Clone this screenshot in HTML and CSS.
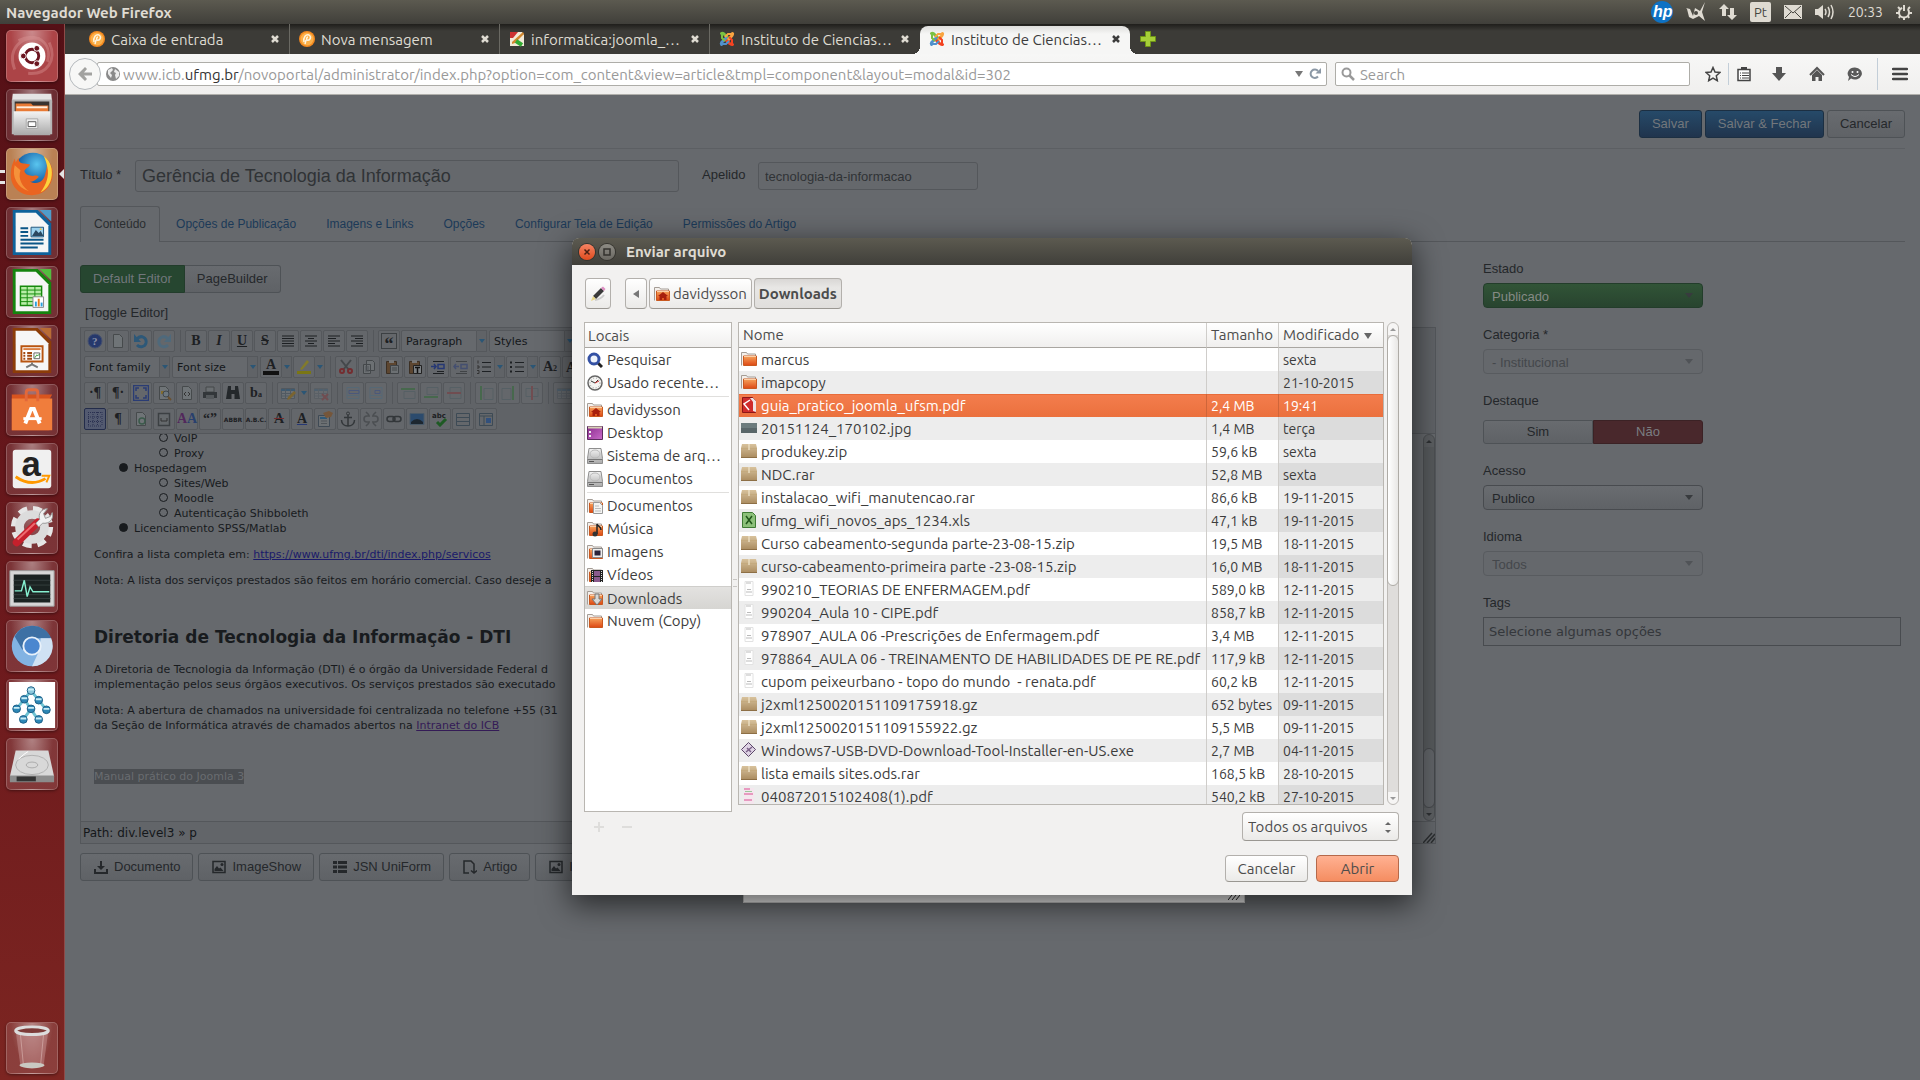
FILE: index.html
```html
<!DOCTYPE html>
<html lang="pt-BR">
<head>
    <meta charset="UTF-8">
    <meta name="viewport" content="width=device-width, initial-scale=1.0">
    <title>Instituto de Ciencias Biológicas - Enviar arquivo</title>
    <link rel="stylesheet" href="styles.css">
</head>
<body>
    <!-- shared icons -->
    <svg class="sprite" width="0" height="0" aria-hidden="true">
        <defs>
            <linearGradient id="g-orange" x1="0" y1="0" x2="0" y2="1"><stop offset="0" stop-color="#f7a35c"/><stop offset="1" stop-color="#dd4814"/></linearGradient>
            <linearGradient id="g-box" x1="0" y1="0" x2="0" y2="1"><stop offset="0" stop-color="#d8c29c"/><stop offset="1" stop-color="#a98a5e"/></linearGradient>
            <linearGradient id="g-grey" x1="0" y1="0" x2="0" y2="1"><stop offset="0" stop-color="#f4f4f4"/><stop offset="1" stop-color="#a9a9a9"/></linearGradient>
            <linearGradient id="g-purple" x1="0" y1="0" x2="1" y2="1"><stop offset="0" stop-color="#8b2c8f"/><stop offset="1" stop-color="#c86bc9"/></linearGradient>
            <radialGradient id="g-fox" cx=".6" cy=".3" r=".8"><stop offset="0" stop-color="#59c5ef"/><stop offset=".6" stop-color="#1863a8"/><stop offset="1" stop-color="#0b2b63"/></radialGradient>
        </defs>
        <symbol id="i-folder" viewBox="0 0 16 16"><path d="M.5 14.500V1.500h5l1 1.500h8v3" fill="#f4f0ec" stroke="#a59d96"/><path d="M2.500 5h13v9.500h-13z" fill="url(#g-orange)" stroke="#c9581f"/><path d="M3 5.500h12" stroke="#fbd0a8"/></symbol>
        <symbol id="i-home-folder" viewBox="0 0 16 16"><use href="#i-folder"/><path d="M9 6l5 4h-1.500v4h-2.500v-2h-2v2h-2.500v-4H4z" fill="#a8200d"/></symbol>
        <symbol id="i-box" viewBox="0 0 16 16"><path d="M1 1h14l1 4v10H0V5z" fill="url(#g-box)"/><path d="M0 5.500h16" stroke="#c4aa7e"/><path d="M0 14.500h16" stroke="#8d6f45"/><path d="M8 1v6" stroke="#eadcc0" stroke-width="1.500"/></symbol>
        <symbol id="i-disk" viewBox="0 0 16 16"><path d="M2 .5h12l1.500 10v5H.5v-5z" fill="url(#g-grey)" stroke="#8e8e8e"/><ellipse cx="8" cy="6" rx="5" ry="4" fill="none" stroke="#b9b9b9"/><path d="M1 11.500h14" stroke="#777"/><path d="M2 13.500h5" stroke="#555"/></symbol>
        <symbol id="i-doc" viewBox="0 0 16 16"><path d="M4 .5h8v14H4z" fill="#fff" stroke="#e2e2e2"/><path d="M5 2h5M6 8.500h4M5 11h6" stroke="#bbb"/></symbol>
        <symbol id="i-joomla" viewBox="0 0 16 16"><g fill="none" stroke-width="3" stroke-linecap="round"><path d="M2.500 2.500C4 1.500 5 3 8.500 6.500" stroke="#7ac143"/><path d="M13.500 2.500C14.500 4 12 5.500 9 9" stroke="#f9a541"/><path d="M13.500 13.500C12 14.500 10 12 7 9" stroke="#f44321"/><path d="M2.500 13.500C1.500 12 3.500 10.500 7 7" stroke="#5091cd"/></g><g fill="none" stroke-width="2"><path d="M3 3v4l3 3" stroke="#7ac143"/><path d="M13 3H9L6 6" stroke="#f9a541"/><path d="M13 13V9l-3-3" stroke="#f44321"/><path d="M3 13h4l3-3" stroke="#5091cd"/></g></symbol>
        <symbol id="i-mail-tab" viewBox="0 0 16 16"><circle cx="8" cy="8" r="8" fill="#f58a1f"/><circle cx="8" cy="8" r="6.500" fill="#fbb04a"/><path d="M5 11c-1-5 2-8 5-7 3 2 1 6-2 5-1-1 0-3 1-3M7 9l-1 4" fill="none" stroke="#fff4df" stroke-width="1.500"/></symbol>
        <symbol id="i-close" viewBox="0 0 10 10"><path d="M2 2l6 6M8 2L2 8" stroke="currentColor" stroke-width="2.500"/></symbol>
        <symbol id="i-picture" viewBox="0 0 14 14"><path d="M1 1.500h12v11H1z" fill="none" stroke="currentColor" stroke-width="1.500"/><path d="M2.500 11V9L5 6l2 2.500 1.500-1 3 3.500z" fill="currentColor"/><circle cx="10" cy="4.500" r="1.500" fill="currentColor"/></symbol>
        <symbol id="i-page" viewBox="0 0 16 16"><path d="M3.500 1.500h6l3 3v10h-9z" fill="#6f7477" stroke="#464a4c"/></symbol>
        <symbol id="i-grid" viewBox="0 0 16 16"><path d="M1.500 3.500h13v10h-13z" fill="#6b7074" stroke="#51585f"/><path d="M1 5h14" stroke="#3e5a70" stroke-width="2"/><path d="M1 8.500h14M1 11h14M5.500 4v9M10.500 4v9" stroke="#515a62"/></symbol>
    </svg>

    <header class="panel">
        <strong>Navegador Web Firefox</strong>
        <div class="indicators">
            <svg width="22" height="22" viewBox="0 0 22 22"><circle cx="11" cy="11" r="11" fill="#0e72c4"/><text x="2" y="16" class="hp">hp</text></svg>
            <svg width="20" height="20" viewBox="0 0 20 20"><path d="M0 6l4 1 3 7 2-8 5 3 5-9-3 10 3 9-6-5-6 3-4-2-2-8z" fill="#dfdbd2"/><circle cx="10" cy="11" r="2" fill="#4a4943"/></svg>
            <svg width="18" height="18" viewBox="0 0 18 18"><path d="M5 1l5 5H7v7H3V6H0zM13 17l-5-5h3V5h4v7h3z" fill="#dfdbd2"/></svg>
            <span class="kbd">Pt</span>
            <svg width="18" height="14" viewBox="0 0 18 14"><path d="M0 0h18v14H0z" fill="#dfdbd2"/><path d="M1 1l8 7 8-7M1 13l6-6M17 13l-6-6" fill="none" stroke="#46453f"/></svg>
            <svg width="20" height="16" viewBox="0 0 20 16"><path d="M0 5h3l5-4v14l-5-4H0z" fill="#dfdbd2"/><path d="M10 5q2 3 0 6M13 3q3 5 0 10M16 1q4 7 0 14" fill="none" stroke="#dfdbd2" stroke-width="1.500"/></svg>
            <time>20:33</time>
            <svg width="16" height="16" viewBox="0 0 16 16"><circle cx="8" cy="8.500" r="5" fill="none" stroke="#dfdbd2" stroke-width="2" stroke-dasharray="26 6" stroke-dashoffset="-27"/><path d="M8 1v6M2 3l2 2M14 3l-2 2M0 9h3M13 9h3M3 14l1-2M13 14l-1-2M8 13v3" stroke="#dfdbd2" stroke-width="2"/></svg>
        </div>
    </header>

    <div class="desktop">
        <nav class="launcher" aria-label="Lançador">
            <button class="tile dash" aria-label="Painel"><svg viewBox="0 0 52 52"><path d="M8 40C0 20 14 4 34 8M44 12c8 18-2 34-22 32M12 10C30 0 48 12 42 32" fill="none" stroke="#d99" stroke-width="3" opacity=".4"/><circle cx="26" cy="26" r="14" fill="#fff"/><circle cx="26" cy="26" r="7" fill="none" stroke="#6b1520" stroke-width="3"/><g fill="#6b1520" stroke="#fff" stroke-width="1"><circle cx="17" cy="26" r="3"/><circle cx="31" cy="18" r="3"/><circle cx="31" cy="34" r="3"/></g></svg></button>
            <button class="tile" aria-label="Arquivos"><svg viewBox="0 0 52 52"><path d="M6 4h40l1 9H5z" fill="#e4e4e4"/><path d="M5 10h42v36H5z" fill="#b5b5b5"/><path d="M8 12h36v11H8z" fill="#383330"/><path d="M9 14h16l2 2h16v7H9z" fill="#e87a35"/><path d="M10 17h32v2H10z" fill="#fff0e0"/><path d="M7 22h38v25H7z" fill="url(#g-grey)"/><path d="M20 30h12v10H20z" fill="#ededed" stroke="#aaa"/><path d="M22 33h8v5h-8z" fill="#fff" stroke="#555"/></svg></button>
            <button class="tile firefox running" aria-label="Firefox"><svg viewBox="0 0 52 52"><circle cx="27" cy="24" r="20" fill="url(#g-fox)"/><path d="M38 7c8 6 11 15 9 24-3 12-12 17-21 17C12 48 3 38 4 25c0-6 2-10 4-15l1 4 3-5c0 5 3 6 6 6l6 1c-1 3-5 4-6 7 1 4 5 5 9 5 4-1 5 0 6 1-3 3-6 5-9 5 8 4 15-1 16-9 3-9 1-14-2-18z" fill="#ea6420"/><path d="M38 7c8 6 10 15 8 24-2 8-7 12-11 14 6-8 9-17 7-26-1-5-2-8-4-12z" fill="#fcd23c"/><path d="M8 17c-3 12 2 23 15 27-7-5-12-13-9-22z" fill="#f5923a"/></svg></button>
            <button class="tile" aria-label="LibreOffice Writer"><svg viewBox="0 0 52 52"><path d="M6 2h26l14 14v33H6z" fill="#0e629b"/><path d="M34 2h12v12z" fill="#4f9ccb"/><path d="M9 5h21l13 13v28H9z" fill="#f6f6f6"/><path d="M14 21h8M14 25h8M14 29h8M14 33h24M14 37h24M14 41h18" stroke="#0b5687" stroke-width="2"/><path d="M25 20h13v10H25z" fill="#9bd1ee" stroke="#20567c"/><path d="M26 29l4-6 3 3 2-2 3 5z" fill="#2c4860"/><circle cx="35" cy="22" r="1" fill="#f8c53e"/></svg></button>
            <button class="tile" aria-label="LibreOffice Calc"><svg viewBox="0 0 52 52"><path d="M6 2h26l14 14v33H6z" fill="#15840e"/><path d="M34 2h12v12z" fill="#53bd3f"/><path d="M9 5h21l13 13v28H9z" fill="#f6f6f6"/><path d="M14 20h22v20H14z" fill="#b8eda7" stroke="#168a0d" stroke-width="1.500"/><path d="M14 24h22M14 28h22M14 32h22M14 36h22M21 20v20M29 20v20" stroke="#168a0d"/><path d="M27 31h11v11H27z" fill="#fff" stroke="#888"/><path d="M29 36h2v5h-2z" fill="#29a0df"/><path d="M32 33h2v8h-2z" fill="#e2791d"/><path d="M35 37h2v4h-2z" fill="#29a0df"/></svg></button>
            <button class="tile" aria-label="LibreOffice Impress"><svg viewBox="0 0 52 52"><path d="M6 2h26l14 14v33H6z" fill="#8c3c08"/><path d="M34 2h12v12z" fill="#b96c35"/><path d="M9 5h21l13 13v28H9z" fill="#f6f6f6"/><path d="M15 21h22v16H15z" fill="#fff" stroke="#b85410" stroke-width="2"/><path d="M17 24h18" stroke="#dc7f42" stroke-width="2"/><path d="M17 28h2M17 31h2M17 34h2M21 28h5M21 31h5M21 34h5" stroke="#a24810" stroke-width="2"/><path d="M28 28h6v6h-6z" fill="#fff" stroke="#666"/><path d="M29 33l2-3 1 1 2-2" fill="none" stroke="#35a03a"/><path d="M26 38v2l-6 3M26 40l6 3" fill="none" stroke="#777" stroke-width="2"/></svg></button>
            <button class="tile" aria-label="Central de Programas"><svg viewBox="0 0 52 52"><path d="M5 10h42l-3 5v32H5z" fill="#d9541e"/><path d="M5 14h42v33H5z" fill="#f07d3c"/><path d="M20 17V8q0-3 3-3h6q3 0 3 3v9" fill="none" stroke="#e2683a" stroke-width="3"/><path d="M19 40l6-15h3l6 15" fill="none" stroke="#fff" stroke-width="4"/><path d="M17 35h19" stroke="#fff" stroke-width="3"/></svg></button>
            <button class="tile" aria-label="Amazon"><svg viewBox="0 0 52 52"><rect x="6" y="6" width="40" height="40" rx="3" fill="#f0f0f0"/><text x="15" y="33" class="amazon">a</text><path d="M9 34q16 11 31 2" fill="none" stroke="#f90" stroke-width="3"/><path d="M36 33h8l-3 7" fill="none" stroke="#f90" stroke-width="2"/></svg></button>
            <button class="tile" aria-label="Configurações do sistema"><svg viewBox="0 0 52 52"><circle cx="26" cy="25" r="19" fill="none" stroke="#e6e6e6" stroke-width="6" stroke-dasharray="9 6"/><circle cx="26" cy="25" r="13" fill="none" stroke="#dcdcdc" stroke-width="9"/><path d="M10 41L32 20" stroke="#c5202c" stroke-width="8" stroke-linecap="round"/><path d="M11 38L29 21" stroke="#ee6a70" stroke-width="2"/><path d="M30 21l4-4c-2-6 2-11 8-11l-4 5 2 5 5-2 2-4c2 7-3 12-10 11l-4 4z" fill="#f1f1f1" stroke="#999"/></svg></button>
            <button class="tile" aria-label="Monitor do sistema"><svg viewBox="0 0 52 52"><path d="M3 9h46v37H3z" fill="#d6d6d6" stroke="#999"/><path d="M7 13h38v29H7z" fill="#1b2322"/><path d="M7 19h38M7 24h38M7 34h38M7 38h38" stroke="#35403e"/><path d="M8 30h7l3-11 3 17 3-10 3 5h17" fill="none" stroke="#86f0d0" stroke-width="1.500"/></svg></button>
            <button class="tile" aria-label="Chromium"><svg viewBox="0 0 52 52"><circle cx="26" cy="26" r="21" fill="#82b3e3"/><path d="M26 5a21 21 0 0 1 20 13H26l-10 12L8 16A21 21 0 0 1 26 5z" fill="#3d70a4"/><path d="M46 18a21 21 0 0 1-20 29l8-17 1-12z" fill="#cfe1f3"/><circle cx="26" cy="26" r="9" fill="#4b87cf" stroke="#e8f1fa" stroke-width="2"/></svg></button>
            <button class="tile" aria-label="Rede"><svg viewBox="0 0 52 52"><path d="M2 2h48v48H2z" fill="#fff"/><path d="M25 11L10 30M25 11l16 20M18 20l14 21M25 30l-8 11" stroke="#6ec3d3" stroke-width="3"/><g fill="#2d87b5" stroke="#1b5f86"><circle cx="25" cy="11" r="4" fill="#8cc8dc"/><circle cx="18" cy="20" r="4"/><circle cx="33" cy="21" r="4"/><circle cx="10" cy="30" r="4"/><circle cx="25" cy="30" r="4"/><circle cx="41" cy="31" r="4"/><circle cx="17" cy="41" r="4"/><circle cx="33" cy="41" r="4"/></g><path d="M22 10h6M15 19h6M30 20h6M7 29h6M22 29h6M38 30h6M14 40h6M30 40h6" stroke="#c9eef6" stroke-width="2"/></svg></button>
            <button class="tile" aria-label="Disco"><svg viewBox="0 0 52 52"><path d="M9 12h34l6 27H3z" fill="#d8d8d8"/><path d="M3 38h46v7H3z" fill="#8c8c8c"/><path d="M10 39h20v5H10z" fill="#333"/><ellipse cx="26" cy="27" rx="17" ry="10" fill="none" stroke="#b0b0b0"/><ellipse cx="26" cy="27" rx="6" ry="3" fill="none" stroke="#aaa"/><path d="M12 21q6-6 10-8" fill="none" stroke="#fff"/></svg></button>
            <button class="tile trash" aria-label="Lixeira"><svg viewBox="0 0 52 52"><path d="M9 8l5 37q12 5 24 0l5-37z" fill="#c99" opacity=".45"/><path d="M14 12l3 31M38 12l-3 31" stroke="#e7c9c5" opacity=".5"/><ellipse cx="26" cy="44" rx="13" ry="3" fill="#c9c9c2"/><ellipse cx="26" cy="8" rx="17" ry="4" fill="#7d3b38" stroke="#dcdcdc" stroke-width="3"/></svg></button>
        </nav>

        <main class="browser">
            <div class="tabstrip">
                <div class="tab"><svg class="i16"><use href="#i-mail-tab"/></svg><span>Caixa de entrada</span><button aria-label="Fechar aba"><svg width="10" height="10"><use href="#i-close"/></svg></button></div>
                <div class="tab"><svg class="i16"><use href="#i-mail-tab"/></svg><span>Nova mensagem</span><button aria-label="Fechar aba"><svg width="10" height="10"><use href="#i-close"/></svg></button></div>
                <div class="tab"><svg class="i16" viewBox="0 0 16 16"><path d="M1 1h12l2 3v11H1z" fill="#f3ead8"/><path d="M1 1h8L4 7H1z" fill="#c33"/><path d="M3 11L14 1l1 2-9 9-3 1z" fill="#d2872e"/><path d="M7 10l6 4" stroke="#3a3" stroke-width="4"/></svg><span>informatica:joomla_…</span><button aria-label="Fechar aba"><svg width="10" height="10"><use href="#i-close"/></svg></button></div>
                <div class="tab"><svg class="i16"><use href="#i-joomla"/></svg><span>Instituto de Ciencias…</span><button aria-label="Fechar aba"><svg width="10" height="10"><use href="#i-close"/></svg></button></div>
                <div class="tab active"><svg class="i16"><use href="#i-joomla"/></svg><span>Instituto de Ciencias…</span><button aria-label="Fechar aba"><svg width="10" height="10"><use href="#i-close"/></svg></button></div>
                <button class="newtab" aria-label="Nova aba"><svg class="i16" viewBox="0 0 16 16"><path d="M5.500.5h5v5h5v5h-5v5h-5v-5h-5v-5h5z" fill="#a6cf38" stroke="#6f9417"/></svg></button>
            </div>
            <div class="navbar">
                <button class="back" aria-label="Voltar"><svg class="i16" viewBox="0 0 16 16"><path d="M8 1l2 2-3 3.500h8v3H7L10 13l-2 2-7-7z" fill="#a2a2a0"/></svg></button>
                <div class="urlbar">
                    <svg class="i16" viewBox="0 0 16 16"><circle cx="8" cy="8" r="7" fill="#8a8a8a"/><path d="M3 4l4-2 1 2-3 3 2 2-1 3-3-4zM10 3l4 3v4l-3 3-1-4 1-2-2-1z" fill="#ececec"/></svg>
                    <div class="url" role="textbox" aria-label="Endereço">www.icb.<b>ufmg.br</b>/novoportal/administrator/index.php?option=com_content&amp;view=article&amp;tmpl=component&amp;layout=modal&amp;id=302</div>
                    <svg width="8" height="6" viewBox="0 0 8 6"><path d="M0 0h8L4 6z" fill="#777"/></svg>
                    <svg width="12" height="12" viewBox="0 0 12 12"><path d="M9 8.500A4.200 4.200 0 1 1 9 3" fill="none" stroke="#8b98a5" stroke-width="2"/><path d="M12 0v5.500H6.500z" fill="#8b98a5"/></svg>
                </div>
                <label class="searchbar"><svg width="14" height="14" viewBox="0 0 14 14"><circle cx="5.500" cy="5.500" r="4" fill="none" stroke="#999" stroke-width="2"/><path d="M8.500 8.500L13 13" stroke="#999" stroke-width="2.500"/></svg><input type="text" placeholder="Search" aria-label="Search"></label>
                <div class="nav-icons">
                    <button aria-label="Favoritar"><svg class="i16" viewBox="0 0 16 16"><path d="M8 1.500l2 4.500 5 .5-3.700 3.300 1 4.900L8 12.200l-4.300 2.500 1-4.900L1 6.500 6 6z" fill="none" stroke="#444" stroke-width="1.500"/></svg></button>
                    <button class="sep-left" aria-label="Lista"><svg class="i16" viewBox="0 0 16 16"><path d="M2 3.500h12v11H2z" fill="#fff" stroke="#444" stroke-width="1.500"/><path d="M5 1h6v3H5z" fill="#444"/><path d="M4 7h1M4 9.500h1M4 12h1M6 7h7M6 9.500h7M6 12h7" stroke="#444"/></svg></button>
                    <button aria-label="Downloads"><svg class="i16" viewBox="0 0 16 16"><path d="M5 1h6v6h4l-7 8-7-8h4z" fill="#555"/></svg></button>
                    <button aria-label="Início"><svg class="i16" viewBox="0 0 16 16"><path d="M1 9l7-7 7 7" fill="none" stroke="#555" stroke-width="2"/><path d="M3 9l5-5 5 5v6H9.500v-4h-3v4H3z" fill="#555"/></svg></button>
                    <button aria-label="Hello"><svg class="i16" viewBox="0 0 16 16"><path d="M8 1.500a7 6 0 1 1-4 11L1 15l1-4A7 6 0 0 1 8 1.500z" fill="#5a5a5a"/><circle cx="5.500" cy="6" r="1" fill="#fff"/><circle cx="10.500" cy="6" r="1" fill="#fff"/><path d="M4 8.500q4 4 8 0" fill="none" stroke="#fff"/></svg></button>
                    <button class="sep-left menu" aria-label="Menu"><svg class="i16" viewBox="0 0 16 16"><path d="M1 3h14M1 8h14M1 13h14" stroke="#444" stroke-width="2.500" stroke-linecap="round"/></svg></button>
                </div>
            </div>

            <section class="page">
                <div class="actions">
                    <button class="btn primary">Salvar</button>
                    <button class="btn primary">Salvar &amp; Fechar</button>
                    <button class="btn">Cancelar</button>
                </div>
                <form class="titles">
                    <label for="titulo">Título *</label>
                    <input id="titulo" class="title-input" type="text" value="Gerência de Tecnologia da Informação">
                    <label for="apelido" class="alias-label">Apelido</label>
                    <input id="apelido" class="alias-input" type="text" value="tecnologia-da-informacao">
                </form>
                <nav class="tabs">
                    <a href="#conteudo" class="current">Conteúdo</a>
                    <a href="#publicacao">Opções de Publicação</a>
                    <a href="#imagens">Imagens e Links</a>
                    <a href="#opcoes">Opções</a>
                    <a href="#tela">Configurar Tela de Edição</a>
                    <a href="#permissoes">Permissões do Artigo</a>
                </nav>

                <div class="columns">
                    <div class="editor-col">
                        <div class="switch">
                            <button class="btn success">Default Editor</button><button class="btn">PageBuilder</button>
                        </div>
                        <a href="#toggle" class="toggle">[Toggle Editor]</a>

                        <div class="editor">
                            <div class="toolbars">
                                <div class="toolbar">
                                    <button aria-label="Ajuda"><svg viewBox="0 0 16 16"><circle cx="8" cy="8" r="7" fill="#26386c" stroke="#44506f"/><text x="5" y="12" class="help">?</text></svg></button>
                                    <button aria-label="Novo"><svg viewBox="0 0 16 16"><use href="#i-page"/></svg></button>
                                    <button aria-label="Desfazer"><svg viewBox="0 0 16 16"><path d="M4 6c4-5 10-1 9 4-1 4-6 5-9 2" fill="none" stroke="#2d5878" stroke-width="3"/><path d="M1 1v8h7z" fill="#2d5878"/></svg></button>
                                    <button class="off" aria-label="Refazer"><svg viewBox="0 0 16 16"><path d="M12 6C8 1 2 5 3 10c1 4 6 5 9 2" fill="none" stroke="#3c6c8c" stroke-width="3"/><path d="M15 1v8H8z" fill="#3c6c8c"/></svg></button>
                                    <i></i>
                                    <button class="serif"><b>B</b></button>
                                    <button class="serif"><em>I</em></button>
                                    <button class="serif"><u>U</u></button>
                                    <button class="serif"><s>S</s></button>
                                    <button aria-label="Justificar"><svg viewBox="0 0 16 16"><path d="M2 3h12M2 5.500h12M2 8h12M2 10.500h12M2 13h12" stroke="#1d2023" stroke-width="1.200"/></svg></button>
                                    <button aria-label="Centralizar"><svg viewBox="0 0 16 16"><path d="M2 3h12M5 5.500h6M2 8h12M5 10.500h6M2 13h12" stroke="#1d2023" stroke-width="1.200"/></svg></button>
                                    <button aria-label="Alinhar à esquerda"><svg viewBox="0 0 16 16"><path d="M2 3h12M2 5.500h8M2 8h12M2 10.500h7M2 13h12" stroke="#1d2023" stroke-width="1.200"/></svg></button>
                                    <button aria-label="Alinhar à direita"><svg viewBox="0 0 16 16"><path d="M2 3h12M6 5.500h8M2 8h12M7 10.500h7M2 13h12" stroke="#1d2023" stroke-width="1.200"/></svg></button>
                                    <i></i>
                                    <button class="serif"><span class="framed">“</span></button>
                                    <select aria-label="Formato"><option>Paragraph</option></select><span class="drop"></span>
                                    <select aria-label="Estilos"><option>Styles</option></select><span class="drop"></span>
                                </div>
                                <div class="toolbar">
                                    <select aria-label="Fonte"><option>Font family</option></select><span class="drop"></span>
                                    <select aria-label="Tamanho"><option>Font size</option></select><span class="drop"></span>
                                    <button class="serif" aria-label="Cor do texto"><span class="bar">A</span></button><span class="drop"></span>
                                    <button aria-label="Realce"><svg viewBox="0 0 16 16"><path d="M4 10l7-9 2 2-7 8z" fill="#827b2b"/><path d="M1 12h14v3H1z" fill="#7a7614"/></svg></button><span class="drop"></span>
                                    <i></i>
                                    <button aria-label="Recortar"><svg viewBox="0 0 16 16"><path d="M3 1l8 10M13 1L5 11" stroke="#44484b" stroke-width="2"/><g fill="none" stroke="#742d30" stroke-width="2"><circle cx="4" cy="12" r="2"/><circle cx="12" cy="12" r="2"/></g></svg></button>
                                    <button aria-label="Copiar"><svg viewBox="0 0 16 16"><path d="M5.500 1.500h6l2 2v8h-8zM2.500 5.500h7v9h-7z" fill="#6c7073" stroke="#44484b"/><path d="M4 8h4M4 10h4M4 12h4" stroke="#50555a"/></svg></button>
                                    <button aria-label="Colar"><svg viewBox="0 0 16 16"><path d="M2.500 2.500h10v12h-10z" fill="#5d4630" stroke="#3c3024"/><path d="M5 1h5v3H5z" fill="#777"/><path d="M6.500 6.500h8v8h-8z" fill="#6c7073" stroke="#3f4346"/><path d="M8 9h5M8 11h5" stroke="#44484b"/></svg></button>
                                    <button aria-label="Colar texto"><svg viewBox="0 0 16 16"><path d="M2.500 2.500h10v12h-10z" fill="#5d4630" stroke="#3c3024"/><path d="M5 1h5v3H5z" fill="#777"/><path d="M6.500 6.500h8v8h-8z" fill="#7c8083" stroke="#222"/><path d="M8 8.500h5M10.500 8v6" stroke="#111" stroke-width="1.500"/></svg></button>
                                    <button aria-label="Recuo"><svg viewBox="0 0 16 16"><path d="M3 2.500h11M7 12.500h7M3 14.500h11" stroke="#1d2023"/><path d="M8 5.500h6v4H8zM1 7.500h5M4 5l2 2.500L4 10" fill="none" stroke="#263875" stroke-width="1.500"/></svg></button>
                                    <button class="off" aria-label="Remover recuo"><svg viewBox="0 0 16 16"><path d="M3 2.500h11M7 12.500h7M3 14.500h11" stroke="#1d2023"/><path d="M8 5.500h6v4H8zM1 7.500h5M3 5L1 7.500 3 10" fill="none" stroke="#263875" stroke-width="1.500"/></svg></button>
                                    <button aria-label="Lista numerada"><svg viewBox="0 0 16 16"><path d="M6 3.500h9M6 8h9M6 12.500h9" stroke="#1d2023"/><path d="M2 1.500v3M1 7h2v2H1M1 11.500h2v3H1" fill="none" stroke="#333"/></svg></button><span class="drop"></span>
                                    <button aria-label="Lista"><svg viewBox="0 0 16 16"><path d="M6 3.500h9M6 8h9M6 12.500h9" stroke="#1d2023"/><path d="M1 3.500h2M1 8h2M1 12.500h2" stroke="#1d2023" stroke-width="2"/></svg></button><span class="drop"></span>
                                    <button class="serif"><span>A<small>2</small></span></button>
                                    <button class="serif"><span>A<sup>2</sup></span></button>
                                </div>
                                <div class="toolbar">
                                    <button class="pilcrow">·¶</button>
                                    <button class="pilcrow">¶·</button>
                                    <button aria-label="Tela cheia"><svg viewBox="0 0 16 16"><path d="M.5.5h15v15H.5z" fill="none" stroke="#2a3c74" stroke-width="1.500"/><path d="M3 6V3h3M10 3h3v3M13 10v3h-3M6 13H3v-3" fill="none" stroke="#2a3c74" stroke-width="1.500"/></svg></button>
                                    <button aria-label="Visualizar"><svg viewBox="0 0 16 16"><use href="#i-page"/><path d="M5 6h3v3H5z" fill="#826c2e"/><circle cx="10" cy="9" r="3" fill="#6d7880" stroke="#40474d"/><path d="M12 12l3 3" stroke="#6a5030" stroke-width="2"/></svg></button>
                                    <button aria-label="Código"><svg viewBox="0 0 16 16"><use href="#i-page"/><path d="M7 7L5 9l2 2M9 7l2 2-2 2" fill="none" stroke="#333"/></svg></button>
                                    <button aria-label="Imprimir"><svg viewBox="0 0 16 16"><path d="M4 2h8v5H4z" fill="#6a6e71" stroke="#44484b"/><path d="M1 7h14v6H1z" fill="#33373a"/><path d="M4 10h8v4H4z" fill="#55595c"/></svg></button>
                                    <button aria-label="Localizar"><svg viewBox="0 0 16 16"><path d="M3 1h3v4h4V1h3l2 13H9.500V9h-3v5H1z" fill="#24282b"/></svg></button>
                                    <button class="serif"><span>b<small>a</small></span></button>
                                    <i></i>
                                    <button aria-label="Tabela"><svg viewBox="0 0 16 16"><use href="#i-grid"/><path d="M7 15l1-3 6-6 2 2-6 6z" fill="#7a6430"/></svg></button><span class="drop"></span>
                                    <button class="off" aria-label="Excluir tabela"><svg viewBox="0 0 16 16"><use href="#i-grid"/><path d="M9 9l6 6M15 9l-6 6" stroke="#7c3538" stroke-width="2"/></svg></button>
                                    <i></i>
                                    <button class="off" aria-label="Linha"><svg viewBox="0 0 16 16"><path d="M2 2.500h12v11H2zM2 10.500h12" fill="none" stroke="#4a6a80"/><path d="M4 5.500h10v3H4z" fill="none" stroke="#334a8a"/></svg></button>
                                    <button class="off" aria-label="Célula"><svg viewBox="0 0 16 16"><path d="M2 2.500h12v11H2zM2 10.500h12" fill="none" stroke="#4a6a80"/><path d="M7 5.500h5v3H7z" fill="none" stroke="#334a8a"/></svg></button>
                                    <i></i>
                                    <button class="off" aria-label="Linha antes"><svg viewBox="0 0 16 16"><path d="M4 6.500h11v7H4z" fill="none" stroke="#4a5a60"/><path d="M1 4h14" stroke="#2c6a30" stroke-width="2"/></svg></button>
                                    <button class="off" aria-label="Linha depois"><svg viewBox="0 0 16 16"><path d="M4 2.500h11v7H4z" fill="none" stroke="#4a5a60"/><path d="M1 12h14" stroke="#2c6a30" stroke-width="2"/></svg></button>
                                    <button class="off" aria-label="Excluir linha"><svg viewBox="0 0 16 16"><path d="M4 2.500h11v11H4z" fill="none" stroke="#4a5a60"/><path d="M1 8h14" stroke="#7c3538" stroke-width="2"/></svg></button>
                                    <i></i>
                                    <button class="off" aria-label="Coluna antes"><svg viewBox="0 0 16 16"><path d="M6 3.500h9v11H6z" fill="none" stroke="#4a5a60"/><path d="M3 1v14" stroke="#2c6a30" stroke-width="2"/></svg></button>
                                    <button class="off" aria-label="Coluna depois"><svg viewBox="0 0 16 16"><path d="M1 3.500h9v11H1z" fill="none" stroke="#4a5a60"/><path d="M12 1v14" stroke="#2c6a30" stroke-width="2"/></svg></button>
                                    <button class="off" aria-label="Excluir coluna"><svg viewBox="0 0 16 16"><path d="M2 3.500h12v8H2z" fill="none" stroke="#4a5a60"/><path d="M8 1v14" stroke="#7c3538" stroke-width="2"/></svg></button>
                                    <i></i>
                                    <button class="off" aria-label="Dividir"><svg viewBox="0 0 16 16"><use href="#i-grid"/></svg></button>
                                </div>
                                <div class="toolbar">
                                    <button class="pressed" aria-label="Guias"><svg viewBox="0 0 16 16"><path d="M1 1.500h14M1 6h14M1 10.500h14M1 15h14M1.500 1v14M6 1v14M10.500 1v14M15 1v14" stroke="#2a3050" stroke-dasharray="1 1"/></svg></button>
                                    <button class="pilcrow">¶</button>
                                    <button aria-label="Visualizar blocos"><svg viewBox="0 0 16 16"><use href="#i-page"/><circle cx="9" cy="10" r="3" fill="none" stroke="#3b5a4b" stroke-width="1.500"/></svg></button>
                                    <button aria-label="Espaço"><svg viewBox="0 0 16 16"><path d="M2.500 2.500h11v12h-11z" fill="#65696c" stroke="#3c4043" stroke-width="1.500"/><path d="M5 7v3h6V7" fill="none" stroke="#333"/></svg></button>
                                    <button class="serif styles"><b>A</b><b>A</b></button>
                                    <button class="serif">“”</button>
                                    <button class="tiny">ABBR</button>
                                    <button class="tiny">A.B.C.</button>
                                    <button class="serif"><s class="red">A</s></button>
                                    <button class="serif"><u class="blue">A</u></button>
                                    <button aria-label="Atributos"><svg viewBox="0 0 16 16"><path d="M1.500 4.500h11v11h-11z" fill="#6c7073" stroke="#3f4a55"/><path d="M3 7h7" stroke="#2e5a7a" stroke-width="2"/><path d="M4 10h6M4 12.500h6" stroke="#50555a"/><path d="M6 2l6-2 4 2-2 4-5 1z" fill="#75563a"/></svg></button>
                                    <button aria-label="Âncora"><svg viewBox="0 0 16 16"><circle cx="8" cy="2.500" r="1.500" fill="none" stroke="#33373a"/><path d="M8 4v11M4 6.500h8M1.500 9c0 4 3 6 6.500 6s6.500-2 6.500-6" fill="none" stroke="#33373a" stroke-width="1.500"/></svg></button>
                                    <button class="off" aria-label="Remover link"><svg viewBox="0 0 16 16"><path d="M7 5H4a3 3 0 0 0 0 6h3M9 5h3a3 3 0 0 1 0 6H9M3 1l3 3M13 1l-3 3M3 15l3-3M13 15l-3-3" fill="none" stroke="#33373a" stroke-width="1.500"/></svg></button>
                                    <button aria-label="Link"><svg viewBox="0 0 16 16"><rect x="1" y="5.500" width="8" height="5" rx="2.500" fill="none" stroke="#33373a" stroke-width="1.500"/><rect x="7" y="5.500" width="8" height="5" rx="2.500" fill="none" stroke="#33373a" stroke-width="1.500"/></svg></button>
                                    <button aria-label="Imagem"><svg viewBox="0 0 16 16"><path d="M1 2.500h14v11H1z" fill="#2c4b6d" stroke="#4a5a68"/><path d="M2 11q6-6 12 0v2H2z" fill="#1d2730"/></svg></button>
                                    <button aria-label="Ortografia"><svg viewBox="0 0 16 16"><text x="0" y="7" class="abc">abc</text><path d="M5 11l3 3 6-6" fill="none" stroke="#1e5a24" stroke-width="3"/></svg></button>
                                    <button aria-label="Quebra"><svg viewBox="0 0 16 16"><path d="M1.500 2.500h13v12h-13zM1 6.500h14M1 10.500h14" fill="none" stroke="#3d4a55"/></svg></button>
                                    <button aria-label="Modelo"><svg viewBox="0 0 16 16"><path d="M1.500 2.500h13v12h-13zM1 5h14M6 5v9" fill="none" stroke="#3d4a55"/><path d="M8 7h5v5H8z" fill="#32507c"/></svg></button>
                                </div>
                            </div>
                            <div class="canvas">
                                <article class="doc">
                                    <ul>
                                        <li class="bare">
                                            <ul><li>VoIP</li><li>Proxy</li></ul>
                                        </li>
                                        <li>Hospedagem
                                            <ul><li>Sites/Web</li><li>Moodle</li><li>Autenticação Shibboleth</li></ul>
                                        </li>
                                        <li>Licenciamento SPSS/Matlab</li>
                                    </ul>
                                    <p>Confira a lista completa em: <a href="https://www.ufmg.br/dti/index.php/servicos">https://www.ufmg.br/dti/index.php/servicos</a></p>
                                    <p>Nota: A lista dos serviços prestados são feitos em horário comercial. Caso deseje a</p>
                                    <h2>Diretoria de Tecnologia da Informação - DTI</h2>
                                    <p>A Diretoria de Tecnologia da Informação (DTI) é o órgão da Universidade Federal d<br>implementação pelos seus órgãos executivos. Os serviços prestados são executado</p>
                                    <p>Nota: A abertura de chamados na universidade foi centralizada no telefone +55 (31<br>da Seção de Informática através de chamados abertos na <a href="#intranet" class="visited">Intranet do ICB</a></p>
                                    <p class="manual"><mark>Manual prático do Joomla 3</mark></p>
                                </article>
                                <div class="scroll dim"><span class="up"></span><div class="trough"><div class="thumb"></div></div><span class="down"></span></div>
                            </div>
                            <div class="status"><span>Path: div.level3 » p</span><svg width="12" height="12" viewBox="0 0 12 12"><path d="M0 12L9 2M4 12l8-9M8 12l4-5" stroke="#2c2f31" stroke-width="1.500"/></svg></div>
                        </div>
                        <div class="extras">
                            <button class="btn"><svg width="14" height="14" viewBox="0 0 14 14"><path d="M1 9v4h12V9" fill="none" stroke="currentColor" stroke-width="2"/><path d="M6 1h2v5h3l-4 4-4-4h3z" fill="currentColor"/></svg>Documento</button>
                            <button class="btn"><svg width="14" height="14"><use href="#i-picture"/></svg>ImageShow</button>
                            <button class="btn"><svg width="14" height="14" viewBox="0 0 14 14"><path d="M0 2.500h4M5 2.500h9M0 7h4M5 7h9M0 11.500h4M5 11.500h9" stroke="currentColor" stroke-width="3"/></svg>JSN UniForm</button>
                            <button class="btn"><svg width="14" height="14" viewBox="0 0 14 14"><path d="M6 13H1V1h7l3 3v4M11 7v6M8 10.500l3 2.500 3-2.500" fill="none" stroke="currentColor" stroke-width="1.500"/></svg>Artigo</button>
                            <button class="btn"><svg width="14" height="14"><use href="#i-picture"/></svg>Imagem</button>
                        </div>
                    </div>

                    <form class="sidebar">
                        <div class="field"><label for="estado">Estado</label><div class="chosen green"><select id="estado"><option>Publicado</option></select></div></div>
                        <div class="field"><label for="categoria">Categoria *</label><div class="chosen faded"><select id="categoria"><option>- Institucional</option></select></div></div>
                        <div class="field"><span>Destaque</span><div class="yesno"><button type="button">Sim</button><button type="button" class="no">Não</button></div></div>
                        <div class="field"><label for="acesso">Acesso</label><div class="chosen"><select id="acesso"><option>Publico</option></select></div></div>
                        <div class="field"><label for="idioma">Idioma</label><div class="chosen faded"><select id="idioma"><option>Todos</option></select></div></div>
                        <div class="field"><label for="tags">Tags</label><input id="tags" type="text" placeholder="Selecione algumas opções"></div>
                    </form>
                </div>
            </section>
        </main>
    </div>

    <!-- small upload popup, mostly covered by the dialog -->
    <div class="popup"><svg width="12" height="6" viewBox="0 0 12 6"><path d="M0 6l4-5M4 6l4-5M8 6l4-5" stroke="#222"/></svg></div>

    <div class="dialog" role="dialog" aria-label="Enviar arquivo">
        <div class="titlebar">
            <button class="win close" aria-label="Fechar"><svg viewBox="0 0 16 16"><path d="M5.500 5.500l5 5M10.500 5.500l-5 5" stroke="#4b2013" stroke-width="1.500"/></svg></button>
            <button class="win" aria-label="Maximizar"><svg viewBox="0 0 16 16"><path d="M5 5h6v6H5z" fill="none" stroke="#33322e" stroke-width="1.500"/></svg></button>
            <h1>Enviar arquivo</h1>
        </div>
        <div class="crumbs">
            <button class="gtk edit" aria-label="Digitar nome"><svg class="i16" viewBox="0 0 16 16"><path d="M5 14q6-1 9-5" stroke="#ccc" stroke-width="2" fill="none"/><path d="M3 10l8-8 3 3-8 8z" fill="#3a3a3a"/><path d="M3 10l3 3-5 2z" fill="#e8d88a"/><path d="M11 2l2-1.500L15.500 3 14 5z" fill="#dd8fc3"/></svg></button>
            <button class="gtk" aria-label="Anterior"><svg width="6" height="8" viewBox="0 0 6 8"><path d="M6 0v8L0 4z" fill="#777"/></svg></button>
            <button class="gtk"><svg class="i16"><use href="#i-home-folder"/></svg>davidysson</button>
            <button class="gtk here">Downloads</button>
        </div>
        <div class="panes">
            <div class="places">
                <h2>Locais</h2>
                <ul>
                    <li><svg class="i16" viewBox="0 0 16 16"><path d="M10 10l5 5" stroke="#222" stroke-width="3"/><circle cx="7" cy="7" r="5" fill="#eef3fb" stroke="#3451a4" stroke-width="3"/></svg>Pesquisar</li>
                    <li><svg class="i16" viewBox="0 0 16 16"><circle cx="8" cy="8" r="7" fill="#f4f4f2" stroke="#666" stroke-width="1.500"/><circle cx="8" cy="8" r="5" fill="none" stroke="#999" stroke-dasharray="1 2"/><path d="M4 6l4 2 3-3" fill="none" stroke="#333"/><path d="M8 8l4-2" stroke="#c33"/></svg>Usado recente…</li>
                    <li class="rule"></li>
                    <li><svg class="i16"><use href="#i-home-folder"/></svg>davidysson</li>
                    <li><svg class="i16" viewBox="0 0 16 16"><path d="M.5 1.500h15v13H.5z" fill="url(#g-purple)" stroke="#5b2a5e"/><path d="M1 2.500h14" stroke="#d6d0b5" stroke-width="2"/><path d="M2 6h2v2H2zM2 10h2v2H2z" fill="#eee"/></svg>Desktop</li>
                    <li><svg class="i16"><use href="#i-disk"/></svg>Sistema de arq…</li>
                    <li><svg class="i16"><use href="#i-disk"/></svg>Documentos</li>
                    <li class="rule"></li>
                    <li><svg class="i16" viewBox="0 0 16 16"><use href="#i-folder"/><path d="M6.500 4.500h6l3 3v8h-9z" fill="#f4f4f2" stroke="#999"/><path d="M8 8h4M8 10.500h6M8 13h6" stroke="#bbb"/></svg>Documentos</li>
                    <li><svg class="i16" viewBox="0 0 16 16"><use href="#i-folder"/><path d="M10 13V3c1 3 4 2 4 6" fill="none" stroke="#222" stroke-width="1.500"/><circle cx="8" cy="13" r="2.500" fill="#333"/></svg>Música</li>
                    <li><svg class="i16" viewBox="0 0 16 16"><use href="#i-folder"/><path d="M5.500 4.500h10v9h-10z" fill="#eee" stroke="#888"/><path d="M7.500 6.500h6v5h-6z" fill="#2a2338"/></svg>Imagens</li>
                    <li><svg class="i16" viewBox="0 0 16 16"><use href="#i-folder"/><path d="M4 3h12v12H4z" fill="#222"/><path d="M7 4h6v5H7zM7 10h6v5H7z" fill="#8a5a8c"/><path d="M5.500 4v11M14.500 4v11" stroke="#ddd" stroke-dasharray="1 1"/></svg>Vídeos</li>
                    <li class="on"><svg class="i16" viewBox="0 0 16 16"><use href="#i-folder"/><path d="M8 4h4v5h3l-5 6-5-6h3z" fill="#d8d8d6" stroke="#777"/></svg>Downloads</li>
                    <li><svg class="i16"><use href="#i-folder"/></svg>Nuvem (Copy)</li>
                </ul>
            </div>
            <div class="splitter"><span></span></div>
            <div class="files">
                <table>
                    <colgroup><col><col class="c-size"><col class="c-date"></colgroup>
                    <thead><tr><th>Nome</th><th>Tamanho</th><th>Modificado <span class="sort"></span></th></tr></thead>
                    <tbody>
                        <tr><td><svg class="i16"><use href="#i-folder"/></svg>marcus</td><td></td><td>sexta</td></tr>
                        <tr><td><svg class="i16"><use href="#i-folder"/></svg>imapcopy</td><td></td><td>21-10-2015</td></tr>
                        <tr class="selected"><td><svg class="i16" viewBox="0 0 16 16"><path d="M1.500.5h10l3 3v12h-13z" fill="#cf2b2b" stroke="#8d1616"/><path d="M9 1h3l3 3v11l-3-1V5z" fill="#f0e4e4"/><path d="M9 3L3 7l5 6" fill="none" stroke="#fff" stroke-width="1.500"/></svg>guia_pratico_joomla_ufsm.pdf</td><td>2,4 MB</td><td>19:41</td></tr>
                        <tr><td><svg class="i16" viewBox="0 0 16 16"><path d="M0 3h16v10H0z" fill="#6c7b7d"/><path d="M0 8h16v5H0z" fill="#596669"/></svg>20151124_170102.jpg</td><td>1,4 MB</td><td>terça</td></tr>
                        <tr><td><svg class="i16"><use href="#i-box"/></svg>produkey.zip</td><td>59,6 kB</td><td>sexta</td></tr>
                        <tr><td><svg class="i16"><use href="#i-box"/></svg>NDC.rar</td><td>52,8 MB</td><td>sexta</td></tr>
                        <tr><td><svg class="i16"><use href="#i-box"/></svg>instalacao_wifi_manutencao.rar</td><td>86,6 kB</td><td>19-11-2015</td></tr>
                        <tr><td><svg class="i16" viewBox="0 0 16 16"><path d="M1.500.5h10l3 3v12h-13z" fill="#8cc07a" stroke="#3f7a34"/><path d="M5 4l6 8M11 4l-6 8" stroke="#20551a" stroke-width="1.500"/></svg>ufmg_wifi_novos_aps_1234.xls</td><td>47,1 kB</td><td>19-11-2015</td></tr>
                        <tr><td><svg class="i16"><use href="#i-box"/></svg>Curso cabeamento-segunda parte-23-08-15.zip</td><td>19,5 MB</td><td>18-11-2015</td></tr>
                        <tr><td><svg class="i16"><use href="#i-box"/></svg>curso-cabeamento-primeira parte -23-08-15.zip</td><td>16,0 MB</td><td>18-11-2015</td></tr>
                        <tr><td><svg class="i16"><use href="#i-doc"/></svg>990210_TEORIAS DE ENFERMAGEM.pdf</td><td>589,0 kB</td><td>12-11-2015</td></tr>
                        <tr><td><svg class="i16"><use href="#i-doc"/></svg>990204_Aula 10 - CIPE.pdf</td><td>858,7 kB</td><td>12-11-2015</td></tr>
                        <tr><td><svg class="i16"><use href="#i-doc"/></svg>978907_AULA 06 -Prescrições de Enfermagem.pdf</td><td>3,4 MB</td><td>12-11-2015</td></tr>
                        <tr><td><svg class="i16"><use href="#i-doc"/></svg>978864_AULA 06 - TREINAMENTO DE HABILIDADES DE PE RE.pdf</td><td>117,9 kB</td><td>12-11-2015</td></tr>
                        <tr><td><svg class="i16"><use href="#i-doc"/></svg>cupom peixeurbano - topo do mundo&nbsp; - renata.pdf</td><td>60,2 kB</td><td>12-11-2015</td></tr>
                        <tr><td><svg class="i16"><use href="#i-box"/></svg>j2xml1250020151109175918.gz</td><td>652 bytes</td><td>09-11-2015</td></tr>
                        <tr><td><svg class="i16"><use href="#i-box"/></svg>j2xml1250020151109155922.gz</td><td>5,5 MB</td><td>09-11-2015</td></tr>
                        <tr><td><svg class="i16" viewBox="0 0 16 16"><path d="M7.500.5l7 7-7 7-7-7z" fill="#ded3e4" stroke="#5b4568"/><path d="M5 10l6-5M6 6l4 4" stroke="#7b6188" stroke-width="1.500"/></svg>Windows7-USB-DVD-Download-Tool-Installer-en-US.exe</td><td>2,7 MB</td><td>04-11-2015</td></tr>
                        <tr><td><svg class="i16"><use href="#i-box"/></svg>lista emails sites.ods.rar</td><td>168,5 kB</td><td>28-10-2015</td></tr>
                        <tr><td><svg class="i16" viewBox="0 0 16 16"><path d="M3 0h10v16H3z" fill="#f5e6ee"/><path d="M3 1h6M3 6h9M3 12h8" stroke="#e79ac0" stroke-width="2"/><path d="M4 3.500h7" stroke="#9cc79c"/></svg>040872015102408(1).pdf</td><td>540,2 kB</td><td>27-10-2015</td></tr>
                    </tbody>
                </table>
            </div>
            <div class="scroll"><span class="up"></span><div class="trough"><div class="thumb"></div></div><span class="down"></span></div>
        </div>
        <div class="footer">
            <div class="addremove"><button disabled aria-label="Adicionar"><svg width="10" height="10" viewBox="0 0 10 10"><path d="M0 5h10M5 0v10" stroke="#dedddb" stroke-width="2"/></svg></button><button disabled aria-label="Remover"><svg width="10" height="10" viewBox="0 0 10 10"><path d="M0 5h10" stroke="#dedddb" stroke-width="2"/></svg></button></div>
            <div class="filter"><select class="gtk" aria-label="Tipo de arquivo"><option>Todos os arquivos</option></select></div>
        </div>
        <div class="buttons">
            <button class="gtk">Cancelar</button>
            <button class="gtk open">Abrir</button>
        </div>
    </div>
</body>
</html>
```
FILE: styles.css
```css
* {
    box-sizing: border-box;
}
body {
    margin: 0;
    height: 100vh;
    display: flex;
    flex-direction: column;
    overflow: hidden;
    position: relative;
    font-family: "Ubuntu", "Noto Sans", sans-serif;
    font-size: 15px;
    font-variant-ligatures: none;
    color: #3c3c3c;
    background: #66696d;
}
button, input, select {
    font: inherit;
    color: inherit;
    margin: 0;
}
button {
    padding: 0;
    border: 0;
    background: none;
}
.sprite {
    position: absolute;
}
.i16 {
    width: 16px;
    height: 16px;
    flex: none;
}

/* top panel */
.panel {
    flex: none;
    height: 24px;
    padding: 0 8px 0 6px;
    display: flex;
    align-items: center;
    justify-content: space-between;
    color: #dfdbd2;
    background: linear-gradient(#5c5a50, #403f3a);
}
.indicators {
    display: flex;
    align-items: center;
    gap: 13px;
    font-size: 14px;
}
.hp {
    font: italic bold 16px "Liberation Sans", sans-serif;
    fill: #fff;
}
.kbd {
    padding: 0 4px;
    height: 20px;
    line-height: 20px;
    font-size: 13px;
    color: #46453f;
    background: #dfdbd2;
    border-radius: 2px;
}

.desktop {
    flex: 1;
    min-height: 0;
    display: flex;
}

/* launcher */
.launcher {
    flex: none;
    width: 65px;
    padding: 6px;
    display: flex;
    flex-direction: column;
    gap: 7px;
    background: linear-gradient(#551016, #6d1a1d 60%, #7c2521);
    border-right: 1px solid #8e4a48;
}
.tile {
    flex: none;
    width: 52px;
    height: 52px;
    border: 1px solid rgba(255, 255, 255, 0.2);
    border-radius: 5px;
    background: radial-gradient(ellipse at 50% 0, rgba(255, 255, 255, 0.45), rgba(255, 255, 255, 0.12) 60%);
    box-shadow: 0 1px 3px rgba(0, 0, 0, 0.4);
}
.tile svg {
    display: block;
    width: 50px;
    height: 50px;
}
.dash {
    background-color: #a02a2e;
}
.firefox {
    background-color: #b0703c;
    position: relative;
}
.running::before {
    content: "";
    position: absolute;
    left: -7px;
    top: 21px;
    width: 5px;
    height: 8px;
    border: solid #e4e4e4;
    border-width: 3px 0;
}
.running::after {
    content: "";
    position: absolute;
    right: -7px;
    top: 20px;
    border: 5px solid transparent;
    border-left: 0;
    border-right-color: #e4e4e4;
}
.amazon {
    font: bold 36px "Liberation Sans", sans-serif;
    fill: #222;
}
.trash {
    margin-top: auto;
}

/* browser chrome */
.browser {
    flex: 1;
    min-width: 0;
    display: flex;
    flex-direction: column;
}
.tabstrip {
    flex: none;
    height: 30px;
    padding-left: 15px;
    display: flex;
    background: linear-gradient(#1f1e1b, #3c3b37 7px);
    color: #dfdbd2;
}
.tab {
    width: 210px;
    padding: 0 9px;
    display: flex;
    align-items: center;
    gap: 6px;
    border-right: 1px solid #6a6963;
    white-space: nowrap;
}
.tab span {
    flex: 1;
}
.tab button {
    display: flex;
}
.tab:nth-child(4) {
    border-color: transparent;
}
.tab.active {
    position: relative;
    margin-top: 2px;
    padding-bottom: 2px;
    border: 0;
    border-radius: 8px 8px 0 0;
    background: linear-gradient(#dededc, #f6f6f5 8px);
    color: #3c3c3c;
}
.tab.active::before, .tab.active::after {
    content: "";
    position: absolute;
    bottom: 0;
    width: 8px;
    height: 8px;
}
.tab.active::before {
    left: -8px;
    background: radial-gradient(circle at 0 0, transparent 8px, #f6f6f5 8px);
}
.tab.active::after {
    right: -8px;
    background: radial-gradient(circle at 100% 0, transparent 8px, #f6f6f5 8px);
}
.newtab {
    margin-left: 10px;
    display: flex;
    align-items: center;
}
.navbar {
    flex: none;
    height: 41px;
    padding: 0 8px 0 4px;
    display: flex;
    align-items: center;
    background: linear-gradient(#f7f7f6, #f0efee);
    border-bottom: 1px solid #b0afab;
}
.back {
    width: 32px;
    height: 32px;
    display: flex;
    align-items: center;
    justify-content: center;
    border: 1px solid #b5b9bd;
    border-radius: 50%;
    background: #f7f7f6;
    z-index: 1;
}
.urlbar, .searchbar {
    height: 24px;
    display: flex;
    align-items: center;
    background: #fff;
    border: 1px solid #aeada8;
    border-radius: 2px;
}
.urlbar {
    flex: 1;
    min-width: 0;
    margin-left: -4px;
    padding: 0 5px 0 7px;
    gap: 6px;
}
.url {
    flex: 1;
    margin-left: -4px;
    white-space: nowrap;
    overflow: hidden;
    color: #999;
}
.url b {
    font-weight: normal;
    color: #333;
}
.searchbar {
    width: 355px;
    margin-left: 8px;
    padding-left: 5px;
    gap: 5px;
}
.searchbar input {
    flex: 1;
    min-width: 0;
    padding: 0;
    border: 0;
    outline: 0;
    background: none;
}
.searchbar input::placeholder {
    color: #999;
}
.nav-icons {
    height: 32px;
    padding-left: 13px;
    display: flex;
    align-items: center;
}
.nav-icons button {
    width: 38px;
    height: 22px;
    padding-right: 6px;
    display: flex;
    align-items: center;
    justify-content: center;
}
.nav-icons button:first-child {
    width: 25px;
}
.nav-icons .sep-left {
    width: 35px;
    padding-right: 4px;
    border-left: 1px solid #c3ced8;
}
.nav-icons .menu {
    height: 32px;
    padding-left: 10px;
    padding-right: 0;
}

/* article form, dimmed by the modal */
.page {
    flex: 1;
    min-height: 0;
    padding: 15px 15px 0;
    font: 13px/18px "Liberation Sans", Arial, sans-serif;
    color: #24272a;
    background: #66696d;
}
.btn {
    height: 28px;
    padding: 0 12px;
    border: 1px solid #4e5256;
    border-radius: 3px;
    background: linear-gradient(#686b6f, #5f6266);
    color: #25282b;
}
.btn.primary {
    color: #72777c;
    border-color: #1c2f42;
    background: linear-gradient(#264a69, #20344d);
}
.btn.success {
    color: #72777c;
    border-color: #223c2b;
    background: #264630;
}
.actions {
    display: flex;
    justify-content: flex-end;
    gap: 3px;
    padding-bottom: 10px;
    border-bottom: 1px solid #5c5f63;
}
.titles {
    display: flex;
    align-items: center;
    padding: 11px 0 14px;
}
.titles label {
    width: 55px;
    padding-bottom: 2px;
}
.titles .alias-label {
    width: 56px;
    margin-left: 23px;
}
.title-input, .alias-input {
    height: 28px;
    padding: 0 6px;
    border: 1px solid #54575b;
    border-radius: 3px;
    background: #65686c;
    color: #303336;
}
.titles .title-input {
    width: 544px;
    height: 32px;
    font-size: 18px;
}
.alias-input {
    width: 220px;
}
.tabs {
    display: flex;
    gap: 2px;
    border-bottom: 1px solid #54575b;
    font-size: 12px;
}
.tabs a {
    height: 35px;
    padding: 0 13px;
    line-height: 34px;
    border: 1px solid transparent;
    border-bottom: 0;
    color: #1c3a58;
    text-decoration: none;
}
.tabs .current {
    margin-bottom: -1px;
    height: 36px;
    color: #2a2d30;
    border-color: #54575b;
    border-radius: 3px 3px 0 0;
    background: #66696d;
}
.columns {
    padding-top: 18px;
    display: grid;
    grid-template-columns: minmax(0, 1fr) 422px;
    gap: 47px;
}
.switch {
    padding-top: 5px;
    display: flex;
}
.switch .btn:first-child {
    border-radius: 3px 0 0 3px;
}
.switch .btn:last-child {
    border-left: 0;
    border-radius: 0 3px 3px 0;
}
.toggle {
    display: block;
    margin: 11px 5px 5px;
    color: #24272a;
    text-decoration: none;
}

/* rich text editor */
.editor {
    border: 1px solid #54575b;
}
.toolbars {
    height: 106px;
    padding: 2px 3px;
    display: flex;
    flex-direction: column;
    gap: 4px;
    overflow: hidden;
    background: #606367;
    border-bottom: 1px solid #54575b;
}
.toolbar {
    height: 22px;
    display: flex;
    flex: none;
}
.toolbar > i {
    flex: none;
    width: 1px;
    margin: 0 4px;
    background: #54575b;
}
.toolbar button {
    flex: none;
    width: 22px;
    height: 22px;
    margin-right: 1px;
    display: flex;
    align-items: center;
    justify-content: center;
    border: 1px solid #55585c;
    border-radius: 2px;
    background: #64676b;
}
.toolbar button svg {
    width: 16px;
    height: 16px;
}
.toolbar .off svg {
    opacity: 0.5;
}
.toolbar .pressed {
    border-color: #232c4a;
    background: #535a70;
}
.toolbar select {
    flex: none;
    appearance: none;
    width: 76px;
    height: 22px;
    padding: 0 4px;
    border: 1px solid #55585c;
    border-radius: 2px 0 0 2px;
    background: #66696d;
    font: 11px "DejaVu Sans", sans-serif;
    color: #14171a;
}
.drop {
    flex: none;
    width: 10px;
    margin: 0 2px 0 0;
    display: flex;
    align-items: center;
    justify-content: center;
    border: 1px solid #55585c;
    border-left: 0;
}
button + .drop {
    margin: 0 1px 0 -1px;
}
.drop::before {
    content: "";
    border: 3px solid transparent;
    border-top: 4px solid #2b5675;
    border-bottom: 0;
}
.toolbar .serif, .toolbar .pilcrow {
    font: bold 14px "Liberation Serif", serif;
    color: #1d2023;
}
.serif small, .serif sup {
    font-size: 8px;
}
.framed {
    width: 16px;
    height: 16px;
    font-size: 18px;
    line-height: 20px;
    border: 1px solid #3c4043;
}
.bar {
    line-height: 12px;
    border-bottom: 4px solid #111;
    padding: 0 3px;
}
.toolbar .styles {
    color: #28406e;
}
.styles b:first-child {
    color: #52285c;
}
.toolbar .tiny {
    font: bold 6px "DejaVu Sans", sans-serif;
    color: #1d2023;
}
.help {
    font: bold 11px "Liberation Serif", serif;
    fill: #8c93a8;
}
.abc {
    font: bold 7px "DejaVu Sans", sans-serif;
    fill: #1d2023;
}
.red {
    text-decoration-color: #732c2f;
}
.blue {
    text-decoration-color: #263875;
}
.canvas {
    height: 387px;
    display: flex;
    overflow: hidden;
}
.doc {
    flex: 1;
    padding-left: 13px;
    font: 11px/15px "DejaVu Sans", Verdana, sans-serif;
    color: #181b1e;
    margin-top: -3px;
}
.doc ul {
    margin: 0;
    padding-left: 40px;
    list-style: none;
}
.doc li {
    position: relative;
}
.doc li::before {
    content: "";
    position: absolute;
    left: -15px;
    top: 2px;
    width: 7px;
    height: 7px;
    border: 1px solid #181b1e;
    border-radius: 50%;
    background: #181b1e;
}
.doc ul ul li::before {
    background: none;
}
.doc .bare::before {
    display: none;
}
.doc p {
    margin: 11px 0;
}
.doc a {
    color: #1a1a6a;
}
.doc .visited {
    color: #341b56;
}
.doc h2 {
    margin: 38px 0 14px;
    font-size: 17px;
    line-height: 22px;
}
.doc .manual {
    margin-top: 36px;
}
mark {
    display: inline-block;
    color: #696c70;
    background: #4a4d51;
}
.status {
    height: 22px;
    padding: 0 0 0 2px;
    display: flex;
    justify-content: space-between;
    align-items: flex-end;
    border-top: 1px solid #54575b;
    background: #626569;
    font: 12px/20px "DejaVu Sans", sans-serif;
    color: #14171a;
}
.extras {
    padding-top: 9px;
    display: flex;
    gap: 5px;
}
.extras .btn {
    display: flex;
    align-items: center;
    gap: 6px;
    padding: 0 12px 0 13px;
}

/* options column */
.sidebar {
    display: flex;
    flex-direction: column;
    gap: 18px;
}
.field {
    display: flex;
    flex-direction: column;
    gap: 5px;
}
.chosen {
    position: relative;
    width: 220px;
}
.chosen::after {
    content: "";
    position: absolute;
    right: 10px;
    top: 10px;
    border: 4px solid transparent;
    border-top: 5px solid #383b3e;
    border-bottom: 0;
}
.chosen select {
    display: block;
    appearance: none;
    width: 100%;
    height: 25px;
    padding: 2px 8px 0;
    border: 1px solid #484b4f;
    border-radius: 4px;
    background: linear-gradient(#696c70, #5f6266);
    color: #24272a;
}
.chosen.green select {
    color: #858a85;
    border-color: #233d2b;
    background: linear-gradient(#315437, #28442f);
}
.chosen.faded select {
    color: #44474b;
    border-color: #585b5f;
    background: #65686c;
}
.chosen.faded::after {
    border-top-color: #505357;
}
.yesno {
    width: 220px;
    height: 24px;
    margin-top: 5px;
    display: flex;
}
.yesno button {
    flex: 1;
    border: 1px solid #4e5256;
    border-radius: 3px 0 0 3px;
    background: linear-gradient(#686b6f, #5f6266);
}
.yesno .no {
    color: #7b7e82;
    border-color: #3b2225;
    border-radius: 0 3px 3px 0;
    background: #49282c;
}
#tags {
    width: 418px;
    height: 29px;
    padding: 0 5px;
    border: 1px solid #484b4f;
    background: #66696d;
    font: 13px "DejaVu Sans", sans-serif;
}
#tags::placeholder {
    color: #34373b;
}

.popup {
    position: absolute;
    left: 743px;
    top: 600px;
    width: 502px;
    height: 303px;
    padding: 0 4px 2px;
    display: flex;
    align-items: flex-end;
    justify-content: flex-end;
    background: #e6e6e6;
    border: 1px solid #bbb;
}

/* file chooser */
.dialog {
    position: absolute;
    left: 572px;
    top: 238px;
    width: 840px;
    border-radius: 8px 8px 0 0;
    background: #f2f1f0;
    color: #3c3c3c;
    box-shadow: 0 8px 30px 2px rgba(0, 0, 0, 0.6);
}
.titlebar {
    height: 27px;
    padding: 0 7px;
    display: flex;
    align-items: center;
    gap: 4px;
    border-radius: 7px 7px 0 0;
    background: linear-gradient(#5c5a50, #403f3a);
    color: #dfdbd2;
}
.titlebar h1 {
    margin: 0 0 0 7px;
    font-size: 15px;
}
.win {
    width: 16px;
    height: 16px;
    border-radius: 50%;
    background: linear-gradient(#8d8b84, #6a6862);
    box-shadow: 0 0 0 1px #35342f;
}
.win.close {
    background: linear-gradient(#f58363, #df4b1e);
}
.win svg {
    display: block;
}
.gtk {
    padding: 0 7px;
    border: 1px solid #b3b0ac;
    border-bottom-color: #9a9792;
    border-radius: 4px;
    background: linear-gradient(#fff, #ebeae8);
    color: #4c4c4c;
}
.crumbs {
    padding: 13px 13px;
    display: flex;
    gap: 2px;
}
.crumbs .gtk {
    height: 31px;
    display: flex;
    align-items: center;
    gap: 3px;
    padding: 0 4px;
}
.crumbs .gtk:nth-child(2) {
    padding: 0 7px;
}
.crumbs .edit {
    margin-right: 12px;
}
.crumbs .here {
    font-weight: bold;
    background: linear-gradient(#d9d7d5, #e8e7e5 30%, #e0dedc);
}
.panes {
    height: 490px;
    padding: 0 13px 0 12px;
    display: flex;
    align-items: flex-start;
}
.places {
    flex: none;
    width: 148px;
    height: 490px;
    overflow: hidden;
    border: 1px solid #b9b6b1;
    background: #fff;
}
.places h2 {
    margin: 0;
    height: 25px;
    padding-left: 3px;
    font-size: 15px;
    font-weight: normal;
    line-height: 25px;
    border-bottom: 1px solid #a9a6a1;
    background: linear-gradient(#fff, #f0efee);
    color: #4c4c4c;
}
.places ul {
    margin: 0;
    padding: 0;
    list-style: none;
}
.places li {
    height: 23px;
    padding-left: 2px;
    display: flex;
    align-items: center;
    gap: 4px;
    white-space: nowrap;
}
.places .rule {
    height: 4px;
    margin: 0 2px;
    background: linear-gradient(#fff 2px, #e0dfdd 2px, #e0dfdd 3px, #fff 3px);
}
.places .on {
    background: linear-gradient(#e3e2e0, #d6d5d2);
    border-top: 1px solid #cfcecb;
}
.splitter {
    width: 6px;
    height: 483px;
    display: flex;
    align-items: center;
    justify-content: center;
}
.splitter span {
    width: 4px;
    height: 8px;
    margin-top: 38px;
    border: solid #c8c6c3;
    border-width: 1px 0;
}
.files {
    flex: 1;
    height: 483px;
    overflow: hidden;
    border: 1px solid #b9b6b1;
    background: #fff;
}
.files table {
    width: 100%;
    table-layout: fixed;
    border-collapse: separate;
    border-spacing: 0;
}
.c-size {
    width: 72px;
}
.c-date {
    width: 105px;
}
.files th {
    height: 25px;
    padding: 0 4px;
    text-align: left;
    font-weight: normal;
    white-space: nowrap;
    line-height: 18px;
    color: #4c4c4c;
    border-bottom: 1px solid #a9a6a1;
    background: linear-gradient(#fff, #f0efee);
}
.files td {
    height: 23px;
    padding: 0 4px;
    font-size: 14px;
    line-height: 18px;
    white-space: nowrap;
}
.files td:first-child {
    padding-left: 2px;
    font-size: 15px;
}
.files td:not(:first-child), .files th:not(:first-child) {
    border-left: 1px solid #cfcdca;
}
.files td .i16 {
    margin-right: 4px;
    vertical-align: -2px;
}
.files td:last-child {
    background: #ededed;
}
.files tr:nth-child(even) td {
    background: #ededed;
}
.files tr:nth-child(even) td:last-child {
    background: #dcdcdc;
}
.files .selected td, .files .selected td:last-child {
    color: #fff;
    border-color: #cf6539;
    background: linear-gradient(#e86c3a 1px, #f37d4d 1px, #eb703d);
}
.sort {
    display: inline-block;
    margin-left: 1px;
    vertical-align: 1px;
    border: 4px solid transparent;
    border-top: 6px solid #666;
    border-bottom: 0;
}

/* scrollbars */
.scroll {
    flex: none;
    width: 12px;
    height: 483px;
    margin-left: 3px;
    display: flex;
    flex-direction: column;
    border: 1px solid #bdbab6;
    border-radius: 6px;
    background: #f6f5f4;
}
.scroll span {
    flex: none;
    height: 12px;
    display: flex;
    align-items: center;
    justify-content: center;
}
.scroll span::before {
    content: "";
    border: 3px solid transparent;
    border-top: 0;
    border-bottom: 3px solid #999;
}
.scroll .down::before {
    transform: rotate(180deg);
}
.trough {
    flex: 1;
    background: #dfdddb;
}
.thumb {
    height: 251px;
    margin: 0 -1px;
    border: 1px solid #aeaba6;
    border-radius: 6px;
    background: linear-gradient(to right, #fff, #e8e7e5);
}
.scroll.dim {
    height: 387px;
    margin: 0;
    border-color: #4c4f52;
    background: #5c5f62;
}
.dim .trough {
    display: flex;
    align-items: flex-end;
    background: #56595c;
}
.dim .thumb {
    width: 12px;
    height: 60px;
    border-color: #45484b;
    background: #606367;
}
.scroll.dim span::before {
    border-bottom-color: #2e3133;
}

.footer {
    height: 29px;
    padding: 0 13px 0 22px;
    display: flex;
    align-items: center;
    justify-content: space-between;
}
.addremove {
    display: flex;
    gap: 18px;
}
.filter {
    position: relative;
}
.filter select {
    display: block;
    appearance: none;
    width: 157px;
    height: 29px;
    padding: 0 5px;
}
.filter::before, .filter::after {
    content: "";
    position: absolute;
    right: 8px;
    top: 10px;
    border: 3px solid transparent;
    border-top: 0;
    border-bottom: 3px solid #666;
}
.filter::after {
    top: 18px;
    transform: rotate(180deg);
}
.buttons {
    padding: 14px 13px 13px;
    display: flex;
    justify-content: flex-end;
    gap: 8px;
}
.buttons .gtk {
    width: 83px;
    height: 27px;
}
.buttons .open {
    border-color: #b5694a;
    background: linear-gradient(#ffb192, #f58d61);
}
```
